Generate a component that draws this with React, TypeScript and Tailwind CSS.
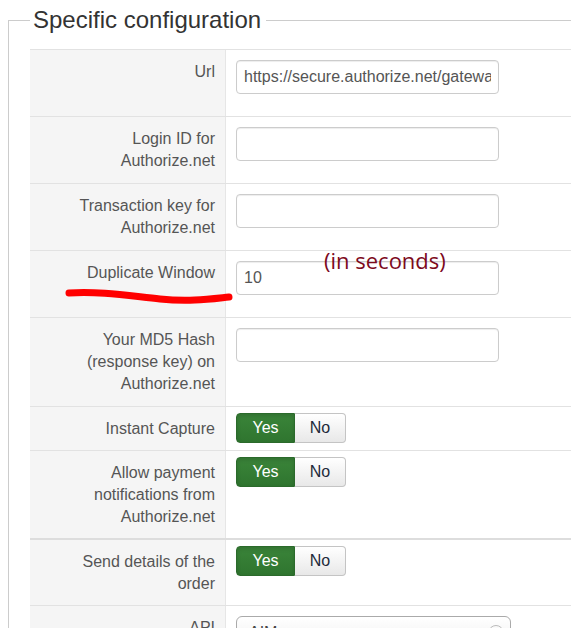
import React from "react";

type Row = {
  label: string[];
  kind: "input" | "toggle" | "select";
  value?: string;
  thick?: boolean;
};

const rows: Row[] = [
  { label: ["Url"], kind: "input", value: "https://secure.authorize.net/gateway/transact.dll" },
  { label: ["Login ID for", "Authorize.net"], kind: "input", value: "" },
  { label: ["Transaction key for", "Authorize.net"], kind: "input", value: "" },
  { label: ["Duplicate Window"], kind: "input", value: "10" },
  { label: ["Your MD5 Hash", "(response key) on", "Authorize.net"], kind: "input", value: "" },
  { label: ["Instant Capture"], kind: "toggle" },
  { label: ["Allow payment", "notifications from", "Authorize.net"], kind: "toggle" },
  { label: ["Send details of the", "order"], kind: "toggle", thick: true },
  { label: ["API"], kind: "select", value: "AIM" },
];

const Toggle = () => (
  <div className="flex h-[30px] text-[16px]">
    <span className="flex w-[59px] items-center justify-center rounded-l-[4px] border border-[#2b6a2b] bg-gradient-to-b from-[#3a8439] to-[#2f752f] text-white shadow-[inset_0_2px_4px_rgba(0,0,0,0.15)]">
      Yes
    </span>
    <span className="flex w-[51px] items-center justify-center rounded-r-[4px] border border-l-0 border-[#c4c4c4] bg-gradient-to-b from-white to-[#e8e8e8] text-[#222a3a]">
      No
    </span>
  </div>
);

const Value = ({ row }: { row: Row }) => {
  if (row.kind === "toggle") {
    return (
      <div className="pt-[6px]">
        <Toggle />
      </div>
    );
  }
  if (row.kind === "select") {
    return (
      <div className="pt-[10px]">
        <div className="flex h-[34px] w-[275px] items-center justify-between rounded-[6px] border border-[#aaa] bg-gradient-to-b from-white to-[#eee] pl-[12px] pr-[6px] text-[16px] text-[#444]">
          <span>AIM</span>
          <span className="h-[16px] w-[16px] rounded-full border border-[#bbb]" />
        </div>
      </div>
    );
  }
  return (
    <div className="pt-[10px] pb-[22px]">
      <input
        readOnly
        defaultValue={row.value}
        className="block h-[34px] w-[263px] rounded-[4px] border border-[#ccc] px-[7px] text-[16px] text-[#555] shadow-[inset_0_1px_1px_rgba(0,0,0,0.075)] outline-none"
        style={{ fontFamily: "'Liberation Sans', Arial, sans-serif" }}
      />
    </div>
  );
};

export default function App() {
  return (
    <div className="relative h-[628px] w-[571px] overflow-hidden bg-white font-['Liberation_Sans',Arial,sans-serif]">
      <fieldset className="ml-[8px] w-[640px] border border-[#ccc] pl-[21px] pt-[9px] pb-[40px]">
        <legend className="pl-[3px] pr-[5px] text-[24px] leading-[40px] text-[#333]">Specific configuration</legend>
        <div className="border-t border-[#e2e2e2]">
          {rows.map((row, i) => (
            <div
              key={i}
              className={`flex ${i === 0 ? "" : row.thick ? "border-t-2 border-[#ddd]" : "border-t border-[#e2e2e2]"}`}
            >
              <div
                className={`w-[196px] shrink-0 border-r border-[#e6e6e6] bg-[#f5f5f5] pt-[11px] pr-[10px] text-right text-[16px] leading-[22px] text-[#555] ${
                  row.kind === "toggle" ? "pb-[10px]" : "pb-[11px]"
                }`}
              >
                {row.label.map((l) => (
                  <div key={l}>{l}</div>
                ))}
              </div>
              <div className="flex-1 pl-[10px]">
                <Value row={row} />
              </div>
            </div>
          ))}
        </div>
      </fieldset>

      {/* annotation drawn over the form */}
      <span className="absolute left-[324px] top-[245px] font-['Open_Sans',sans-serif] text-[22px] leading-[30px] text-[#7d0a1c]">
        (in seconds)
      </span>
      <svg className="absolute left-0 top-0" width="571" height="628" viewBox="0 0 571 628">
        <path
          d="M69 293 C 100 291, 130 296, 160 299 S 210 299, 229 297"
          fill="none"
          stroke="#ff0000"
          strokeWidth="7"
          strokeLinecap="round"
        />
      </svg>
    </div>
  );
}
